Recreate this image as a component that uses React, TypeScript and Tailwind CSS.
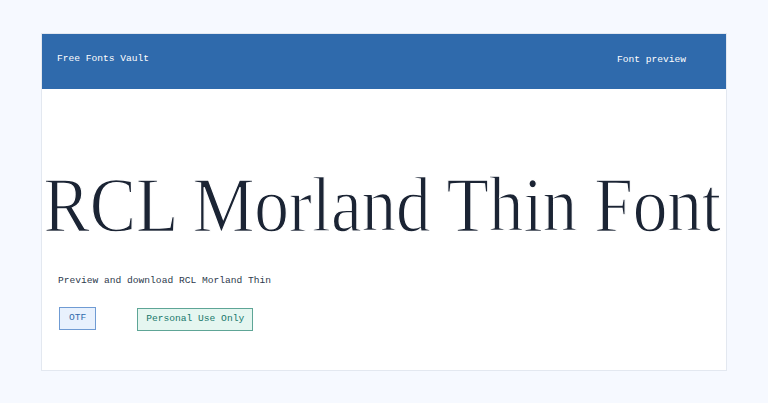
const mono = 'font-["Liberation_Mono",monospace]'

function Badge({ label, tone }: { label: string; tone: 'blue' | 'teal' }) {
  const cls =
    tone === 'blue'
      ? 'bg-[#e8f1fd] border-[#6f9bd3] text-[#2f6aac] px-[9px]'
      : 'bg-[#e5f6f0] border-[#5ea596] text-[#16776a] px-2'
  return (
    <span className={`inline-flex h-[23px] items-center border text-[9.6px] ${cls}`}>
      {label}
    </span>
  )
}

export default function App() {
  return (
    <div className={`min-h-[403px] w-[768px] bg-[#f6f9ff] pt-[33px] ${mono}`}>
      <div className="mx-[41px] border border-[#e3e8f0] bg-white">
        <header className="flex h-[55px] items-center justify-between bg-[#2f6aac] pl-[15px] pr-[40px] text-[9.6px] text-white">
          <span className="-mt-[5px]">Free Fonts Vault</span>
          <span className="-mt-[3px]">Font preview</span>
        </header>

        <div className="flex h-[158px] items-end justify-center overflow-hidden">
          {/* thin display face: a white outline stroke trims the serif weight */}
          <h1 className='mb-[3px] ml-[-4px] origin-center scale-x-[0.879] whitespace-nowrap font-["Liberation_Serif",serif] text-[79px] font-normal leading-none tracking-[-0.2px] text-[#1b2434] [-webkit-text-stroke:1.3px_white]'>
            RCL Morland Thin Font
          </h1>
        </div>

        <p className="ml-[16px] mt-[27px] text-[9.6px] text-[#2d3a4d]">
          Preview and download RCL Morland Thin
        </p>

        <div className="ml-[17px] mt-[17px] flex items-center pb-[39px]">
          <Badge label="OTF" tone="blue" />
          <span className="ml-[41px]">
            <Badge label="Personal Use Only" tone="teal" />
          </span>
        </div>
      </div>
    </div>
  )
}
